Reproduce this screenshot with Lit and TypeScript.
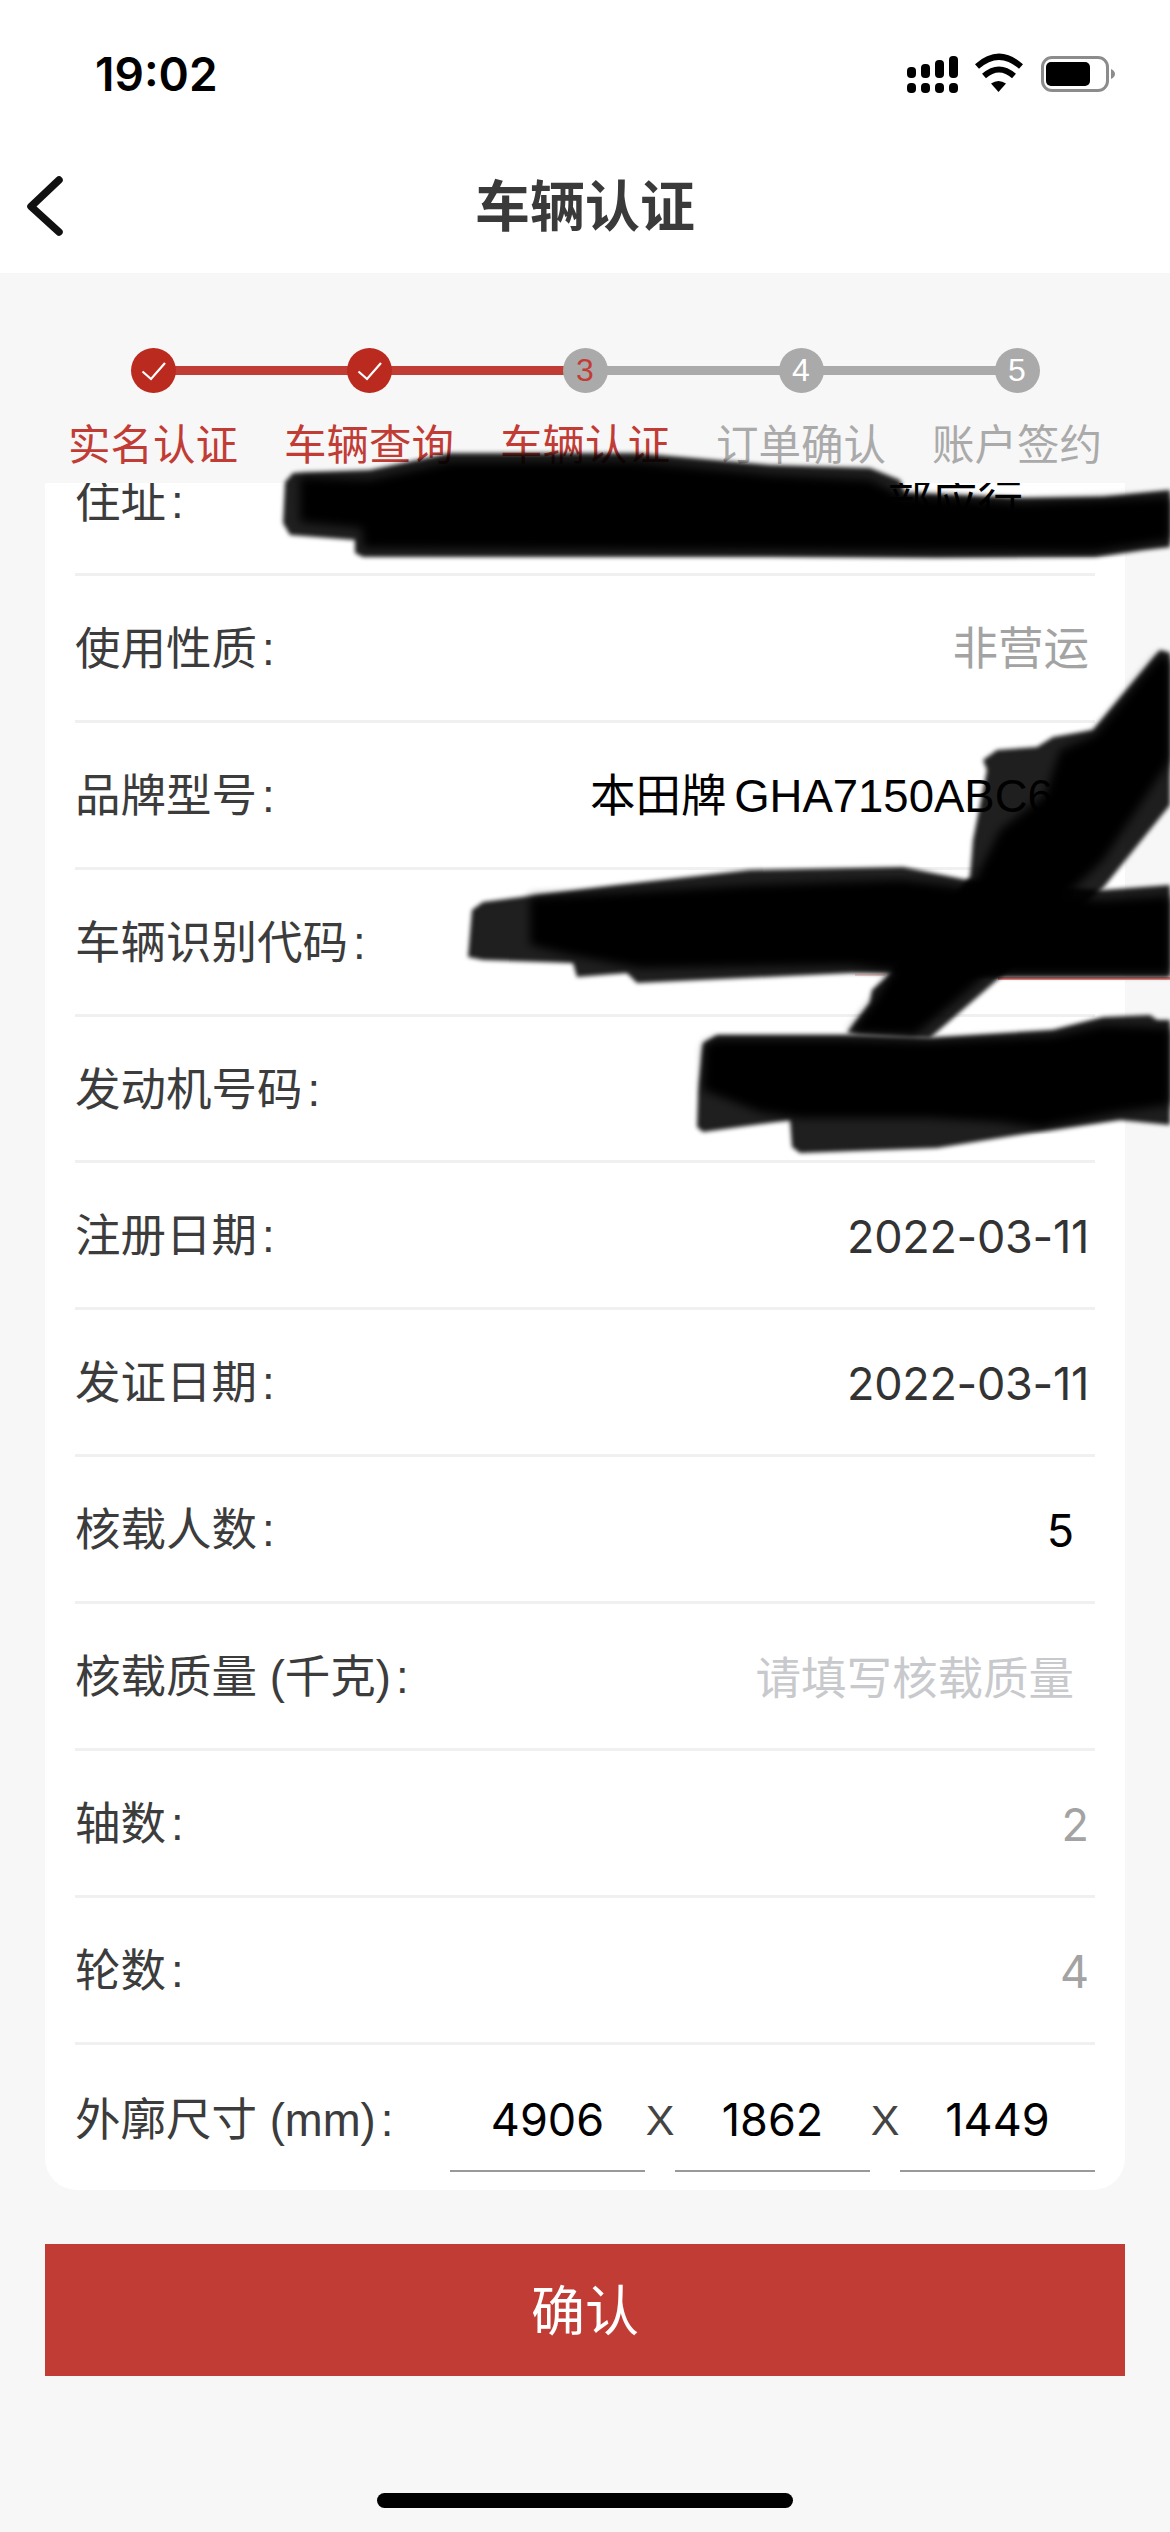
import { LitElement, html, css, svg } from "lit";
import { customElement } from "lit/decorators.js";

const STEPS = [
  { label: "实名认证", state: "done" },
  { label: "车辆查询", state: "done" },
  { label: "车辆认证", state: "current", num: "3" },
  { label: "订单确认", state: "todo", num: "4" },
  { label: "账户签约", state: "todo", num: "5" },
];

type Row = { label: string; value?: string; cls?: string };
const ROWS: Row[] = [
  { label: "住址", value: "部应行", cls: "addr" },
  { label: "使用性质", value: "非营运", cls: "muted" },
  { label: "品牌型号", value: "本田牌 GHA7150ABC6", cls: "brand" },
  { label: "车辆识别代码" },
  { label: "发动机号码" },
  { label: "注册日期", value: "2022-03-11", cls: "date" },
  { label: "发证日期", value: "2022-03-11", cls: "date" },
  { label: "核载人数", value: "5", cls: "input" },
  { label: "核载质量 (千克)", value: "请填写核载质量", cls: "placeholder" },
  { label: "轴数", value: "2", cls: "muted num" },
  { label: "轮数", value: "4", cls: "muted num" },
];

const BRUSH: { soft: string; core: string }[] = [
  {
    soft: "283,523 285,482 293,473 370,470 450,453 637,453 770,465 870,468 900,480 905,493 1023,498 1103,497 1170,490 1170,547 1143,550 1095,557 937,558 770,557 570,557 363,557 355,553 355,540 290,535",
    core: "300,477 370,480 450,462 637,462 770,475 870,480 900,495 1023,503 1170,497 1170,540 1095,552 770,550 363,548 362,528 300,522",
  },
  {
    soft: "468,957 472,910 483,902 617,885 750,870 903,867 967,880 1103,890 1170,885 1170,977 1003,977 887,973 850,973 637,983 627,973 577,977 573,963 483,960",
    core: "530,897 617,893 750,885 903,880 967,888 1103,900 1170,896 1170,974 1003,974 887,970 850,965 640,968 570,955 530,945",
  },
  {
    soft: "1160,650 1170,653 1170,805 1103,888 997,980 930,1038 847,1033 870,1003 872,990 887,977 970,877 973,840 987,770 983,760 997,750 1037,747 1053,737 1093,730",
    core: "1160,655 1170,660 1170,760 1103,860 980,980 915,1035 850,1033 875,1000 890,975 975,880 1000,830 1045,795 1060,750 1095,735",
  },
  {
    soft: "697,1127 698,1093 703,1043 717,1035 843,1035 930,1038 1053,1030 1103,1017 1150,1015 1157,1020 1170,1020 1170,1125 1120,1120 1037,1132 937,1148 800,1153 792,1147 790,1120 703,1132",
    core: "703,1090 705,1045 717,1040 843,1040 930,1042 1053,1036 1103,1025 1170,1028 1170,1105 1120,1112 1040,1128 1000,1122 930,1118 800,1118 760,1112",
  },
];

@customElement("app-root")
export class AppRoot extends LitElement {
  static styles = css`
    :host {
      display: block;
      position: relative;
      width: 1170px;
      height: 2532px;
      overflow: hidden;
      background: #f7f7f7;
      font-family: "Liberation Sans", "Noto Sans CJK SC", sans-serif;
      color: #333;
    }
    .top { background: #fff; height: 273px; display: flex; flex-direction: column; }
    .status {
      height: 132px;
      display: flex;
      align-items: flex-start;
      justify-content: space-between;
    }
    .time {
      font: 600 46px/1 Inter, "Liberation Sans", sans-serif;
      color: #000;
      margin: 51px 0 0 95px;
    }
    .status-icons { display: block; margin-top: 50px; margin-right: 50px; }
    .nav {
      flex: 1;
      position: relative;
      display: flex;
      align-items: center;
      justify-content: center;
      padding-top: 10px;
    }
    .back { position: absolute; left: 24px; top: 42px; display: block; }
    .title { font-size: 55px; font-weight: 700; color: #3a3a3a; line-height: 1; }

    .steps {
      height: 210px;
      box-sizing: border-box;
      padding: 75px 45px 0;
      display: grid;
      grid-template-columns: repeat(5, 216px);
    }
    .step { position: relative; display: flex; flex-direction: column; align-items: center; }
    .step:not(:last-child)::after {
      content: "";
      position: absolute;
      left: 50%;
      top: 18px;
      width: 100%;
      height: 9px;
      background: #aaa;
    }
    .step.done::after { background: #c23c36; }
    .dot {
      position: relative;
      z-index: 1;
      width: 45px;
      height: 45px;
      border-radius: 50%;
      background: #aaa;
      color: #fff;
      font-size: 32px;
      line-height: 45px;
      text-align: center;
    }
    .done .dot { background: #bb2a1e; }
    .dot svg { display: block; }
    .current .dot { color: #c23c36; }
    .step-label { margin-top: 29px; font-size: 42.5px; line-height: 48px; color: #aaa; white-space: nowrap; }
    .done .step-label, .current .step-label { color: #c23c36; }

    .card {
      margin: 0 45px;
      height: 1707px;
      background: #fff;
      border-radius: 0 0 32px 32px;
      overflow: hidden;
      padding: 0 30px;
      box-sizing: border-box;
    }
    .rows { margin-top: -54px; }
    .row {
      height: 146.9px;
      box-sizing: border-box;
      border-bottom: 3px solid #f0f0f0;
      display: flex;
      align-items: center;
      justify-content: space-between;
      font-size: 45.5px;
    }
    .label { color: #3c3c3c; white-space: nowrap; margin-bottom: 6px; }
    .colon { margin-left: 5px; }
    .value { padding-right: 6px; white-space: nowrap; color: #333; margin-bottom: 6px; }
    .muted { color: #a3a3a3; }
    .brand { color: #000; padding-right: 0; width: 505px; box-sizing: border-box; word-spacing: -5px; }
    .date {
      font-family: Inter, "Liberation Sans", sans-serif;
      font-size: 45px;
      letter-spacing: -0.3px;
      margin: 3px 0 0;
    }
    .num { font-family: Inter, "Liberation Sans", sans-serif; font-size: 45px; margin: 3px 0 0; }
    .input {
      color: #000;
      padding-right: 21px;
      font-family: Inter, "Liberation Sans", sans-serif;
      font-size: 45px;
      margin: 3px 0 0;
    }
    .placeholder { color: #c8c9cc; padding-right: 21px; margin-bottom: 3px; }
    .addr { color: #000; padding-right: 72px; }

    .size-row { height: 144px; border-bottom: 0; }
    .size-row .label { margin-bottom: 2px; }
    .size-fields { display: flex; align-items: center; margin-top: 5px; }
    .field {
      width: 195px;
      height: 106px;
      box-sizing: border-box;
      padding-top: 2px;
      border-bottom: 2px solid #999;
      display: flex;
      align-items: center;
      justify-content: center;
      color: #000;
      font-family: Inter, "Liberation Sans", sans-serif;
      font-size: 45px;
    }
    .times { width: 30px; text-align: center; font-size: 43px; color: #444; margin-top: 2px; }

    .confirm {
      display: flex;
      align-items: center;
      justify-content: center;
      box-sizing: border-box;
      padding-bottom: 5px;
      margin: 54px 45px 0;
      height: 132px;
      background: #c23c36;
      color: #fff;
      font-size: 54px;
    }
    .home {
      width: 416px;
      height: 15px;
      margin: 117px auto 0;
      border-radius: 8px;
      background: #000;
    }
    .redaction {
      position: absolute;
      left: 0;
      top: 0;
      pointer-events: none;
    }
  `;

  private statusIcons() {
    return html`<svg class="status-icons" width="215" height="50" viewBox="905 50 215 50" aria-hidden="true">
      <g fill="#000">
        <rect x="907" y="67" width="9" height="11" rx="4"></rect>
        <rect x="921" y="64" width="9" height="14" rx="4"></rect>
        <rect x="935" y="60" width="9" height="18" rx="4"></rect>
        <rect x="949" y="56" width="9" height="22" rx="4"></rect>
        <rect x="907" y="83" width="9" height="10" rx="4"></rect>
        <rect x="921" y="83" width="9" height="10" rx="4"></rect>
        <rect x="935" y="83" width="9" height="10" rx="4"></rect>
        <rect x="949" y="83" width="9" height="10" rx="4"></rect>
      </g>
      <g fill="none" stroke="#000" stroke-width="6">
        <path d="M977 66.5Q999 47 1021 66.5"></path>
        <path d="M984 76Q999 63 1014 76"></path>
      </g>
      <path d="M991 83.5Q998.5 78.5 1006 83.5L998.5 92Z" fill="#000"></path>
      <rect x="1042.5" y="57.5" width="65" height="33" rx="9.5" fill="none" stroke="#8c8c8c" stroke-width="3"></rect>
      <rect x="1046" y="62" width="44" height="24" rx="5" fill="#000"></rect>
      <path d="M1111 69Q1115 71 1115 74Q1115 77 1111 79Z" fill="#8c8c8c"></path>
    </svg>`;
  }

  private redaction() {
    return html`<svg class="redaction" width="1170" height="2532" viewBox="0 0 1170 2532" aria-hidden="true">
      <defs>
        <filter id="b" x="-5%" y="-5%" width="110%" height="110%"><feGaussianBlur stdDeviation="2"></feGaussianBlur></filter>
        <filter id="c" x="-5%" y="-5%" width="110%" height="110%"><feGaussianBlur stdDeviation="5"></feGaussianBlur></filter>
      </defs>
      <rect x="998" y="977" width="172" height="3" fill="#ee8a86"></rect>
      <rect x="855" y="974" width="30" height="2" fill="#f9d5d3"></rect>
      ${BRUSH.map(
        (b) => svg`
          <polygon points=${b.soft} fill="#000" fill-opacity="0.88" filter="url(#b)"></polygon>
          <polygon points=${b.core} fill="#000" filter="url(#c)"></polygon>
        `
      )}
    </svg>`;
  }

  render() {
    return html`
      <div class="top">
        <div class="status">
          <span class="time">19:02</span>
          ${this.statusIcons()}
        </div>
        <div class="nav">
          <svg class="back" width="44" height="64" viewBox="0 0 44 64" aria-hidden="true">
            <path d="M35 6 7 32.500 35 58" fill="none" stroke="#111" stroke-width="7.500" stroke-linecap="round" stroke-linejoin="round"></path>
          </svg>
          <span class="title">车辆认证</span>
        </div>
      </div>
      <div class="steps">
        ${STEPS.map(
          (s) => html`<div class="step ${s.state}">
            <div class="dot">
              ${s.state === "done"
                ? html`<svg width="45" height="45" viewBox="0 0 45 45" aria-hidden="true"><path d="M11.500 23.500 20 31 34 15" fill="none" stroke="#fff" stroke-width="2.200"></path></svg>`
                : s.num}
            </div>
            <div class="step-label">${s.label}</div>
          </div>`
        )}
      </div>
      <div class="card">
        <div class="rows">
          ${ROWS.map(
            (r) => html`<div class="row">
              <span class="label">${r.label}<span class="colon">:</span></span>
              ${r.value ? html`<span class="value ${r.cls}">${r.value}</span>` : ""}
            </div>`
          )}
          <div class="row size-row">
            <span class="label">外廓尺寸 (mm)<span class="colon">:</span></span>
            <div class="size-fields">
              <div class="field">4906</div>
              <span class="times">X</span>
              <div class="field">1862</div>
              <span class="times">X</span>
              <div class="field">1449</div>
            </div>
          </div>
        </div>
      </div>
      <div class="confirm">确认</div>
      <div class="home"></div>
      ${this.redaction()}
    `;
  }
}
